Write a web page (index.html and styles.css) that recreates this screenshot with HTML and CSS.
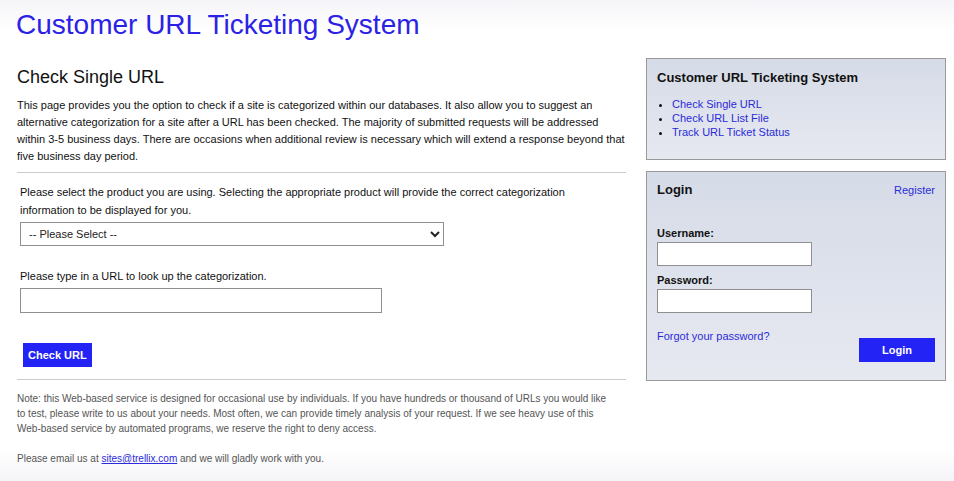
FILE: index.html
```html
<!DOCTYPE html>
<html lang="en">
<head>
  <meta charset="UTF-8">
  <meta name="viewport" content="width=device-width, initial-scale=1.0">
  <title>Customer URL Ticketing System</title>
  <link rel="stylesheet" href="styles.css">
</head>
<body>
  <div class="page">
    <h1 class="site-title">Customer URL Ticketing System</h1>

    <div class="columns">
      <div class="main">
        <h2 class="main-title">Check Single URL</h2>
        <p class="intro">This page provides you the option to check if a site is categorized within our databases. It also allow you to suggest an<br>alternative categorization for a site after a URL has been checked. The majority of submitted requests will be addressed within 3-5 business days. There are occasions when additional review is necessary which will extend a response beyond that five business day period.</p>

        <hr class="rule">

        <form class="check-form">
          <p class="field-label">Please select the product you are using. Selecting the appropriate product will provide the correct categorization information to be displayed for you.</p>
          <select class="product-select">
            <option>-- Please Select --</option>
          </select>

          <p class="field-label url-label">Please type in a URL to look up the categorization.</p>
          <input class="url-input" type="text">

          <div class="form-actions">
            <button class="btn" type="button">Check URL</button>
          </div>
        </form>

        <hr class="rule rule-bottom">

        <div class="note">
          <p>Note: this Web-based service is designed for occasional use by individuals. If you have hundreds or thousand of URLs you would like to test, please write to us about your needs. Most often, we can provide timely analysis of your request. If we see heavy use of this Web-based service by automated programs, we reserve the right to deny access.</p>
          <p>Please email us at <a href="#">sites@trellix.com</a> and we will gladly work with you.</p>
        </div>
      </div>

      <div class="sidebar">
        <div class="box">
          <h3 class="box-title">Customer URL Ticketing System</h3>
          <ul class="nav-list">
            <li><a href="#">Check Single URL</a></li>
            <li><a href="#">Check URL List File</a></li>
            <li><a href="#">Track URL Ticket Status</a></li>
          </ul>
        </div>

        <div class="box login-box">
          <div class="box-head">
            <h3 class="box-title">Login</h3>
            <a class="register" href="#">Register</a>
          </div>
          <label class="login-label">Username:</label>
          <input class="login-input" type="text">
          <label class="login-label">Password:</label>
          <input class="login-input" type="password">
          <div class="login-foot">
            <a class="forgot" href="#">Forgot your password?</a>
            <button class="btn btn-login" type="button">Login</button>
          </div>
        </div>
      </div>
    </div>
  </div>
</body>
</html>
```

FILE: styles.css
```css
html, body {
  height: 100%;
}

body {
  margin: 0;
  font-family: "Liberation Sans", Arial, sans-serif;
  color: #111;
  background: linear-gradient(to bottom, #f5f4f8 0, #fff 30px, #fff calc(100% - 30px), #f4f3f7 100%);
}

a {
  color: #2b2bd9;
  text-decoration: none;
}

.page {
  padding: 9px 8px 0 17px;
}

.site-title {
  margin: 0 0 0 -1px;
  font-size: 28px;
  line-height: 32px;
  font-weight: normal;
  color: #2b22e6;
}

.columns {
  display: flex;
  gap: 20px;
  margin-top: 17px;
}

.main {
  width: 609px;
}

.main-title {
  margin: 8px 0 0;
  font-size: 18px;
  line-height: 22px;
  font-weight: normal;
}

.intro {
  margin: 9px 0 0;
  font-size: 11px;
  line-height: 17px;
}

.rule {
  margin: 7px 0 0;
  border: 0;
  border-top: 1px solid #ccc;
}

.check-form {
  padding: 10px 50px 0 3px;
}

.field-label {
  margin: 0;
  font-size: 11px;
  line-height: 18px;
}

.product-select {
  display: block;
  width: 424px;
  height: 24px;
  margin-top: 3px;
  padding: 0 4px;
  font-family: inherit;
  font-size: 11px;
  color: #222;
  background: #fff;
  border: 1px solid #8f8f8f;
  border-radius: 0;
}

.url-label {
  margin-top: 21px;
}

.url-input {
  display: block;
  width: 362px;
  height: 25px;
  margin-top: 3px;
  box-sizing: border-box;
  border: 1px solid #8f8f8f;
}

.form-actions {
  padding: 30px 0 0 3px;
}

.btn {
  height: 24px;
  padding: 0 5px;
  font-family: inherit;
  font-size: 11px;
  font-weight: bold;
  color: #fff;
  background: #2323f5;
  border: 0;
  border-radius: 0;
}

.rule-bottom {
  margin-top: 12px;
}

.note {
  padding: 11px 12px 0 0;
  font-size: 10px;
  line-height: 15px;
  color: #555;
}

.note p {
  margin: 0 0 15px;
}

.note a {
  color: #2b2bd9;
  text-decoration: underline;
}

.sidebar {
  width: 300px;
  display: flex;
  flex-direction: column;
  gap: 11px;
}

.box {
  padding: 10px 10px 20px;
  border: 1px solid #999;
  background: linear-gradient(to bottom, #d5dbe7, #e7e9f1);
}

.box-title {
  margin: 0;
  font-size: 13px;
  line-height: 18px;
  font-weight: bold;
}

.nav-list {
  margin: 10px 0 0;
  padding-left: 15px;
  font-size: 11px;
  line-height: 14px;
}

.box-head {
  display: flex;
  justify-content: space-between;
  align-items: center;
}

.box-head .box-title {
  line-height: 16px;
}

.register {
  font-size: 11px;
}

.login-box {
  padding-bottom: 18px;
}

.login-label {
  display: block;
  margin-top: 8px;
  font-size: 11px;
  line-height: 13px;
  font-weight: bold;
}

.box-head + .login-label {
  margin-top: 29px;
}

.login-input {
  display: block;
  width: 155px;
  height: 24px;
  margin-top: 2px;
  box-sizing: border-box;
  border: 1px solid #8f8f8f;
}

.login-foot {
  display: flex;
  justify-content: space-between;
  align-items: flex-start;
  margin-top: 17px;
}

.forgot {
  font-size: 11px;
  line-height: 13px;
}

.btn-login {
  width: 76px;
  margin-top: 8px;
}
```
